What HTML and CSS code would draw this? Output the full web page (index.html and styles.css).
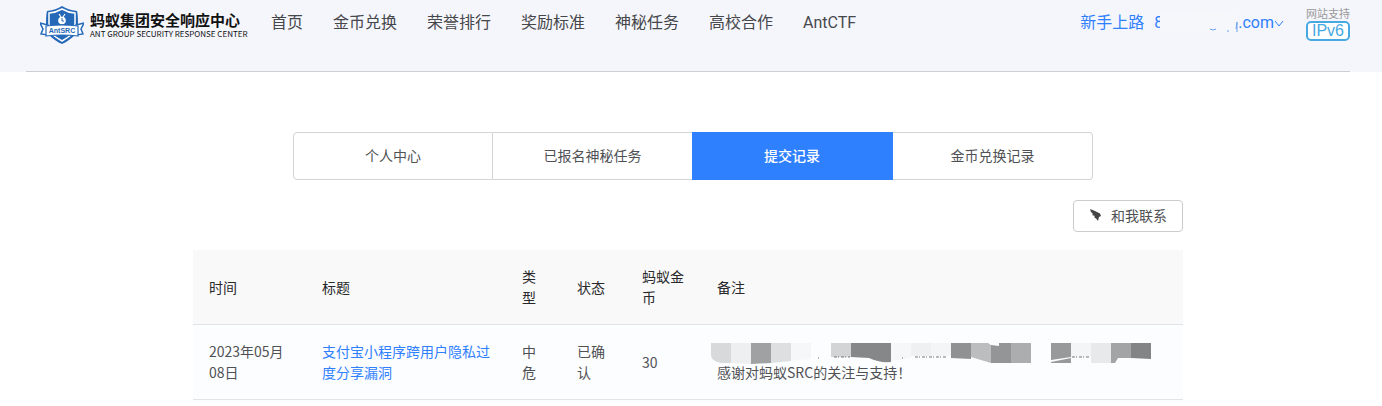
FILE: index.html
```html
<!DOCTYPE html>
<html lang="zh-CN">
<head>
<meta charset="utf-8">
<title>蚂蚁集团安全响应中心</title>
<link rel="stylesheet" href="styles.css">
</head>
<body>
<header class="header">
  <div class="header-inner">
    <a class="brand" href="#">
      <svg class="brand-mark" viewBox="0 0 44 38" aria-hidden="true">
        <path d="M22 0Q28 4 37 5Q38 8 38 19C38 28 31 34 22 38C13 34 6 28 6 19Q6 8 7 5Q16 4 22 0Z" fill="#2468b8"/>
        <path d="M22 3Q28 6.500 35 7V19C35 27 29 31 22 35C15 31 9 27 9 19V7Q16 6.500 22 3Z" fill="none" stroke="#fff" stroke-width="1.500"/>
        <circle cx="22" cy="14.500" r="3.800" fill="#fff"/>
        <path d="M19 8L21 11M25 8L23 11" stroke="#fff" stroke-width="1.200"/>
        <path d="M22 12V15H24" fill="none" stroke="#2468b8"/>
        <path d="M0 17L8 19V29L1 28L3 23Z" fill="#fff" stroke="#2468b8" stroke-width="1.500"/>
        <path d="M44 17L36 19V29L43 28L41 23Z" fill="#fff" stroke="#2468b8" stroke-width="1.500"/>
        <path d="M6 20Q22 18 38 20V30Q22 28 6 30Z" fill="#fff" stroke="#2468b8" stroke-width="1.200"/>
        <text class="mark-text" x="22" y="27" text-anchor="middle">AntSRC</text>
      </svg>
      <span class="brand-text">
        <span class="brand-name">蚂蚁集团安全响应中心</span>
        <span class="brand-sub">ANT GROUP SECURITY RESPONSE CENTER</span>
      </span>
    </a>
    <nav class="nav">
      <a href="#">首页</a>
      <a href="#">金币兑换</a>
      <a href="#">荣誉排行</a>
      <a href="#">奖励标准</a>
      <a href="#">神秘任务</a>
      <a href="#">高校合作</a>
      <a href="#">AntCTF</a>
    </nav>
    <div class="account">
      <a href="#">新手上路</a>
      <button class="user" type="button">
        <span>8</span>
        <svg class="user-mask" viewBox="0 0 78 24" aria-hidden="true">
          <path d="M0 3L60 1L77 3V17L70 20L0 21Z" fill="#f6f7fb"/>
          <path d="M50 18Q53 20 56 18M67 20H69M76 18L77 11V21" fill="none" stroke="#6ba3f0"/>
        </svg>
        <span>.com</span>
        <svg class="chevron" viewBox="0 0 10 8" aria-hidden="true"><path d="M1 2L5 7L9 2" fill="none" stroke="#2f80ff"/></svg>
      </button>
    </div>
    <div class="ipv6">
      <span class="ipv6-label">网站支持</span>
      <span class="ipv6-badge">IPv6</span>
    </div>
  </div>
</header>
<main class="main">
  <div class="tabs" role="tablist">
    <button class="tab" type="button" role="tab">个人中心</button>
    <button class="tab" type="button" role="tab">已报名神秘任务</button>
    <button class="tab tab-active" type="button" role="tab" aria-selected="true">提交记录</button>
    <button class="tab" type="button" role="tab">金币兑换记录</button>
  </div>
  <div class="toolbar">
    <button class="contact" type="button">
      <svg class="contact-icon" viewBox="0 0 14 14" aria-hidden="true"><path d="M1 1L6 3L11 5.500L12 8L10 9L9 13L7.500 11L5 9L6 8L3 7L4 6L2 4Z" fill="#444"/></svg>
      和我联系
    </button>
  </div>
  <table class="records">
    <colgroup><col class="c-time"><col class="c-title"><col class="c-type"><col class="c-state"><col class="c-coin"><col></colgroup>
    <thead>
      <tr><th>时间</th><th>标题</th><th>类型</th><th>状态</th><th>蚂蚁金币</th><th>备注</th></tr>
    </thead>
    <tbody>
      <tr>
        <td>2023年05月08日</td>
        <td><a href="#">支付宝小程序跨用户隐私过度分享漏洞</a></td>
        <td>中危</td>
        <td>已确认</td>
        <td>30</td>
        <td>
          <svg class="mosaic" viewBox="0 0 440 21" aria-hidden="true">
            <path d="M0 0H20V20H10Q0 18 0 12Z" fill="#d8d9da"/>
            <path d="M20 0H40V21L20 20Z" fill="#eeeff0"/>
            <path d="M40 0H60V20L40 21Z" fill="#a0a1a3"/>
            <path d="M60 0H80V18L60 20Z" fill="#dedfe0"/>
            <path d="M80 0H100V16L80 18Z" fill="#f6f7f9"/>
            <path d="M120 0H140V14H120Z" fill="#d3d4d5"/>
            <path d="M140 0H180V19Q168 20 158 15L140 14Z" fill="#868789"/>
            <path d="M180 0H200V15L180 18Z" fill="#f6f7f9"/>
            <path d="M200 0H220V13H200Z" fill="#eff0f2"/>
            <path d="M220 0H240V13H220Z" fill="#f4f5f7"/>
            <path d="M240 0H260V16L240 15Z" fill="#909193"/>
            <path d="M260 0H277L280 2V20L260 14Z" fill="#bcbdbf"/>
            <path d="M280 2L288 3V0H300V20H280Z" fill="#949597"/>
            <path d="M300 0H320V20H300Z" fill="#acadaf"/>
            <path d="M340 0H360V14L340 17ZM340 19L360 15V20H340Z" fill="#98999b"/>
            <path d="M360 0H380V14H360Z" fill="#f4f5f7"/>
            <path d="M380 0H400V20H380Z" fill="#e8e9eb"/>
            <path d="M400 0H420V15H407L404 20H400Z" fill="#a3a4a6"/>
            <path d="M420 0H440V16L420 15Z" fill="#838486"/>
            <path d="M107 15H108M123 14H139M191 15H192M204 14H236M361 14H379" fill="none" stroke="#777" stroke-dasharray="3 1 1 2"/>
          </svg>
          <span class="remark">感谢对蚂蚁SRC的关注与支持！</span>
        </td>
      </tr>
    </tbody>
  </table>
</main>
</body>
</html>
```

FILE: styles.css
```css
* { box-sizing: border-box; }
body {
  margin: 0;
  background: #fff;
  color: #505154;
  font: 14px/21px "Noto Sans CJK SC", sans-serif;
}
a { color: #2f80ff; text-decoration: none; }
button { font: inherit; color: inherit; cursor: pointer; }
.header { padding: 0 32px 0 26px; background: #f5f6fc; }
.header-inner {
  display: flex;
  align-items: flex-start;
  height: 72px;
  border-bottom: 1px solid #ccced3;
}
.brand { display: flex; gap: 6px; padding: 6px 0 0 14px; color: #111; }
.brand-mark { width: 44px; height: 38px; }
.mark-text { font: bold 7px "Liberation Sans", sans-serif; fill: #2468b8; }
.brand-text { display: flex; flex-direction: column; width: 151px; padding-top: 5px; white-space: nowrap; }
.brand-name { font-size: 15px; line-height: 18px; font-weight: 700; }
.brand-sub { font: 8px/10px "Noto Sans CJK SC", sans-serif; }
.nav { display: flex; gap: 30px; padding: 11px 0 0 30px; font: 16px/24px Roboto, "Noto Sans CJK SC", sans-serif; white-space: nowrap; }
.nav a { color: #46474b; }
.account { display: flex; gap: 10px; margin-left: auto; padding-top: 11px; font: 16px/24px Roboto, "Noto Sans CJK SC", sans-serif; white-space: nowrap; color: #2f80ff; }
.user { display: flex; align-items: center; padding: 0; border: 0; background: none; }
.user-mask { width: 78px; height: 24px; margin-left: -3px; }
.chevron { width: 10px; height: 8px; }
.ipv6 { display: flex; flex-direction: column; align-items: center; margin-left: 22px; padding-top: 6px; }
.ipv6-label { font-size: 11px; line-height: 15px; color: #999; }
.ipv6-badge { width: 44px; border: 2px solid #48a9e2; border-radius: 5px; background: #fff; color: #48a9e2; font: 16px/16px "Liberation Sans", sans-serif; text-align: center; }
.main { max-width: 996px; margin: 0 auto; padding: 60px 6px 0 0; }
.tabs { display: grid; grid-template-columns: repeat(4, 1fr); max-width: 810px; margin: 0 auto; padding-left: 10px; }
.tab { height: 48px; padding: 0 6px 2px; border: 1px solid #d3d4d6; border-left-width: 0; background: #fff; }
.tab:first-child { border-left-width: 1px; border-radius: 4px 0 0 4px; }
.tab:last-child { border-radius: 0 4px 4px 0; }
.tab-active { margin-left: -1px; border-color: #2f80ff; background: #2f80ff; color: #fff; font-weight: 500; }
.toolbar { display: flex; justify-content: flex-end; padding: 20px 0 18px; }
.contact { display: flex; align-items: center; gap: 8px; height: 32px; padding: 0 15px 2px; border: 1px solid #ccc; border-radius: 4px; background: #fff; }
.contact-icon { width: 14px; height: 14px; }
.records { width: 100%; table-layout: fixed; border-collapse: separate; border-spacing: 0; }
.c-time { width: 113px; }
.c-title { width: 200px; }
.c-type { width: 55px; }
.c-state { width: 65px; }
.c-coin { width: 75px; }
.records th, .records td { padding: 16px; border-bottom: 1px solid #e3e4e6; text-align: left; font-weight: 400; }
.records th { background: #f9f9f9; color: #29292b; }
.records td { background: #fcfdff; }
.mosaic { display: block; width: 440px; height: 21px; margin: 2px 0 -2px -6px; }
.remark { display: block; }
```
